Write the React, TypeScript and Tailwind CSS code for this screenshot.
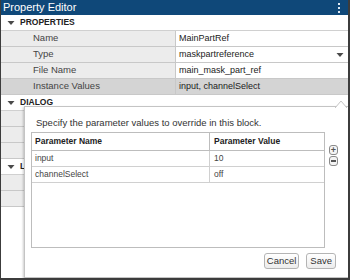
import { ReactNode } from 'react';

const arial = "font-['Liberation_Sans',Arial,sans-serif]";

function Caret() {
  return (
    <svg width="8" height="6" viewBox="0 0 8 6" className="shrink-0">
      <path d="M0.5 1 L7.5 1 L4 5 Z" fill="#4a4a4a" />
    </svg>
  );
}

function Section({ title }: { title: string }) {
  return (
    <div className="flex h-[16px] items-center gap-[5px] border-b border-[#d0d0d0] bg-white pl-[6px]">
      <Caret />
      <span className="text-[8.5px] font-bold text-[#222]">{title}</span>
    </div>
  );
}

function Row({ label, value, active, extra }: { label?: string; value?: string; active?: boolean; extra?: ReactNode }) {
  return (
    <div className={`flex h-[16px] border-b border-[#c8c8c8] text-[9px] ${active ? 'bg-[#d4d4d4]' : ''}`}>
      <div className={`flex w-[174px] items-center pl-[32px] text-[9.5px] text-[#444] ${active ? '' : 'bg-[#ececec]'}`}>{label}</div>
      <div className={`flex flex-1 items-center justify-between border-l border-[#c8c8c8] pl-[3px] pr-[4px] text-[#222] ${active ? '' : 'bg-white'}`}>
        <span>{value}</span>
        {extra}
      </div>
    </div>
  );
}

export default function App() {
  return (
    <div className={`relative h-[280px] w-[350px] overflow-hidden border-b-2 border-l border-r-2 border-[#3c3c3c] bg-white ${arial}`}>
      {/* Title bar */}
      <div className="flex h-[15px] items-center justify-between bg-[#0f4879] pl-[2px] pr-[8px]">
        <span className="text-[11px] leading-none text-white">Property Editor</span>
        <div className="flex flex-col gap-[2px]">
          <span className="h-[2px] w-[2px] bg-[#dfe8f2]" />
          <span className="h-[2px] w-[2px] bg-[#dfe8f2]" />
          <span className="h-[2px] w-[2px] bg-[#dfe8f2]" />
        </div>
      </div>

      {/* Property grid */}
      <Section title="PROPERTIES" />
      <Row label="Name" value="MainPartRef" />
      <Row label="Type" value="maskpartreference" extra={<Caret />} />
      <Row label="File Name" value="main_mask_part_ref" />
      <Row label="Instance Values" value="input, channelSelect" active />
      <Section title="DIALOG" />
      <Row />
      <Row />
      <Row />
      <Section title="LAYOUT" />
      <Row />
      <Row />

      {/* Instance values popup */}
      <div className="absolute left-[23px] top-[106px] flex h-[172px] w-[325px] flex-col border border-[#c4c4c4] bg-white shadow-[-1px_1px_2px_rgba(0,0,0,0.2)]">
        <svg width="12" height="8" viewBox="0 0 12 8" className="absolute right-[1px] top-[-7px]">
          <path d="M0 8 L6 1 L12 8" fill="white" stroke="#c4c4c4" strokeWidth="1" />
        </svg>
        <p className="mt-[9px] pl-[11px] text-[9.5px] leading-[13px] text-[#333]">
          Specify the parameter values to override in this block.
        </p>
        <div className="mt-[3px] flex gap-[4px] pl-[6px]">
          <div className="flex h-[116px] w-[294px] flex-col border border-[#bdbdbd] text-[8.5px]">
            <div className="flex h-[18px] border-b border-[#bdbdbd] font-bold text-[#222]">
              <div className="flex w-[177px] items-center pl-[3px]">Parameter Name</div>
              <div className="flex flex-1 items-center border-l border-[#bdbdbd] pl-[4px]">Parameter Value</div>
            </div>
            {[
              ['input', '10'],
              ['channelSelect', 'off'],
            ].map(([n, v]) => (
              <div key={n} className="flex h-[16px] border-b border-[#d0d0d0] text-[#444]">
                <div className="flex w-[177px] items-center pl-[3px]">{n}</div>
                <div className="flex flex-1 items-center border-l border-[#d0d0d0] pl-[4px]">{v}</div>
              </div>
            ))}
          </div>
          <div className="mt-[13px] flex flex-col gap-[1px]">
            <div className="flex h-[10px] w-[9px] items-center justify-center rounded-[3px] border border-[#8a8a8a] bg-[#f4f4f4] text-[9px] font-bold leading-none text-[#555]">+</div>
            <div className="flex h-[10px] w-[9px] items-center justify-center rounded-[3px] border border-[#8a8a8a] bg-[#f4f4f4]">
              <span className="h-[1.5px] w-[5px] bg-[#555]" />
            </div>
          </div>
        </div>
        <div className="mt-[5px] flex justify-end gap-[7px] pr-[12px]">
          <button className="h-[16px] rounded-[3px] border border-[#b4b4b4] bg-gradient-to-b from-white to-[#ececec] px-[2px] text-[9.5px] text-[#333]">Cancel</button>
          <button className="h-[16px] rounded-[3px] border border-[#b4b4b4] bg-gradient-to-b from-white to-[#ececec] px-[3px] text-[9.5px] text-[#333]">Save</button>
        </div>
      </div>
    </div>
  );
}
